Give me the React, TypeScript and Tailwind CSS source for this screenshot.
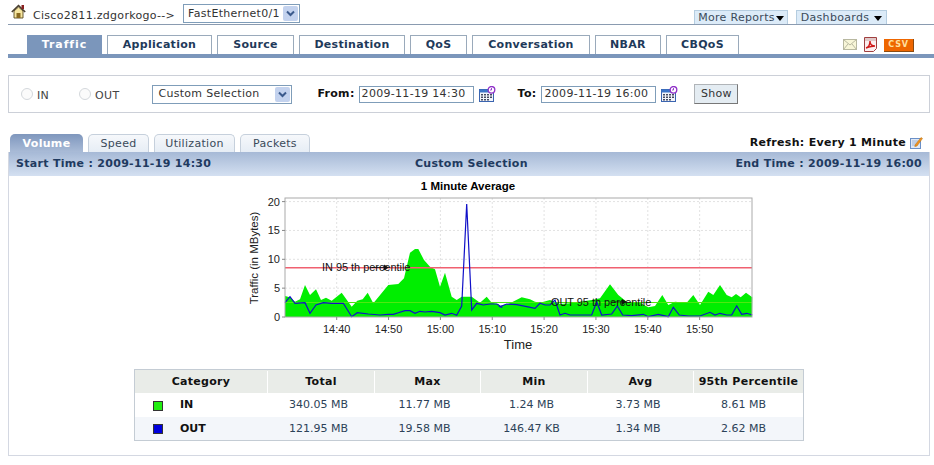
import React from "react"

const mainTabs = [
  { label: "Traffic", width: "w-[75px]", active: true },
  { label: "Application", width: "w-[105px]" },
  { label: "Source", width: "w-[77px]" },
  { label: "Destination", width: "w-[106px]" },
  { label: "QoS", width: "w-[57px]" },
  { label: "Conversation", width: "w-[118px]" },
  { label: "NBAR", width: "w-[66px]" },
  { label: "CBQoS", width: "w-[73px]" },
]

const subTabs = [
  { label: "Volume", width: "w-[73px]", active: true },
  { label: "Speed", width: "w-[61px]" },
  { label: "Utilization", width: "w-[81px]" },
  { label: "Packets", width: "w-[70px]" },
]

const rows = [
  { name: "IN", swatch: "bg-[#22ee11]", height: "h-[24px]", total: "340.05 MB", max: "11.77 MB", min: "1.24 MB", avg: "3.73 MB", pct: "8.61 MB", bg: "bg-white" },
  { name: "OUT", swatch: "bg-[#0000dd]", height: "h-[23px]", total: "121.95 MB", max: "19.58 MB", min: "146.47 KB", avg: "1.34 MB", pct: "2.62 MB", bg: "bg-[#f3f6fa]" },
]

// traced from the graph, in 3x crop coordinates
const greenLeft = [[135,348],[150,352],[165,365],[180,358],[195,315],[210,345],[228,328],[243,360],[258,353],[275,362],[305,338],[335,380],[352,362],[368,358],[383,338],[400,370],[445,315],[475,312],[492,295],[510,218],[525,207],[535,207],[552,240],[570,260],[585,268],[600,320],[615,278],[635,350],[650,360],[665,350],[695,350],[720,368],[740,350],[755,368],[775,372]]
const greenRight = [[0,378],[30,370],[65,352],[90,358],[105,365],[120,368],[150,360],[180,372],[210,370],[240,365],[275,360],[300,355],[330,313],[355,345],[380,365],[420,368],[445,382],[465,378],[487,345],[505,375],[525,365],[560,368],[580,345],[600,375],[625,335],[640,345],[660,315],[680,345],[695,352],[708,342],[722,352],[738,338],[757,352]]
const blueLeft = [[135,368],[150,350],[165,370],[195,368],[210,400],[228,375],[250,368],[275,370],[310,370],[335,410],[352,398],[385,402],[420,405],[445,403],[460,403],[475,398],[495,392],[510,392],[525,400],[540,394],[555,396],[575,394],[600,398],[615,405],[635,400],[650,406],[665,378],[680,72],[695,390],[710,370],[730,375],[750,372],[770,372],[787,382]]
const blueRight = [[0,380],[20,372],[50,374],[80,380],[105,385],[120,370],[135,375],[150,375],[165,360],[180,405],[195,400],[210,405],[275,405],[290,365],[305,405],[335,402],[352,378],[368,405],[395,407],[430,403],[445,410],[475,403],[505,410],[520,382],[538,405],[565,408],[600,408],[630,397],[645,405],[660,400],[680,405],[695,405],[710,378],[725,403],[740,400],[757,405]]

const toPts = (left: number[][], right: number[][]) =>
  [...left.map(([x, y]) => [x / 3, y / 3]), ...right.map(([x, y]) => [260 + x / 3, y / 3])]
    .map(([x, y]) => `${x.toFixed(1)},${y.toFixed(1)}`)
    .join(" ")

const greenPts = toPts(greenLeft, greenRight)
const bluePts = toPts(blueLeft, blueRight)

const timeTicks = ["14:40", "14:50", "15:00", "15:10", "15:20", "15:30", "15:40", "15:50"]
const valueTicks = [0, 5, 10, 15, 20]

function Chart() {
  return (
    <svg width="520" height="175" viewBox="0 0 520 175" className="block tracking-normal" fontFamily="'Liberation Sans', Arial, sans-serif">
      <text x="228" y="10" fontSize="11.5" fontWeight="700" textAnchor="middle" fill="#000">1 Minute Average</text>
      <rect x="45" y="18" width="467" height="119" fill="#fff" />
      {timeTicks.map((t, i) => (
        <line key={t} x1={96.7 + i * 51.85} x2={96.7 + i * 51.85} y1="18" y2="137" stroke="#e2e2e2" strokeDasharray="2 2" />
      ))}
      {valueTicks.slice(1).map((v) => (
        <line key={v} x1="45" x2="512" y1={137 - v * 5.77} y2={137 - v * 5.77} stroke="#e2e2e2" strokeDasharray="2 2" />
      ))}
      <polygon points={`45,137 ${greenPts} 512,137`} fill="#00ee00" />
      <line x1="45" x2="512" y1="122.5" y2="122.5" stroke="#50e810" />
      <line x1="45" x2="512" y1="87.8" y2="87.8" stroke="#f06070" strokeWidth="1.4" />
      <polyline points={bluePts} fill="none" stroke="#1010c8" strokeWidth="1.2" />
      <rect x="45" y="18" width="467" height="119" fill="none" stroke="#aaaaaa" />
      {valueTicks.map((v) => (
        <g key={v}>
          <line x1="42" x2="45" y1={137 - v * 5.77} y2={137 - v * 5.77} stroke="#888" />
          <text x="40" y={141 - v * 5.77} fontSize="11" textAnchor="end" fill="#222">{v}</text>
        </g>
      ))}
      {timeTicks.map((t, i) => (
        <g key={t}>
          <line x1={96.7 + i * 51.85} x2={96.7 + i * 51.85} y1="137" y2="140" stroke="#888" />
          <text x={96.7 + i * 51.85} y="153" fontSize="11" textAnchor="middle" fill="#222">{t}</text>
        </g>
      ))}
      <text x="82" y="91" fontSize="10.9" fill="#111">IN 95 th percentile</text>
      <text x="311" y="126" fontSize="10.9" fill="#111">OUT 95 th percentile</text>
      <path d="M132 87.5h16m-4-2.5l4 2.5-4 2.5z" stroke="#111" fill="#111" strokeWidth="0.8" />
      <path d="M372 122h14m-4-2.5l4 2.5-4 2.5z" stroke="#111" fill="#111" strokeWidth="0.8" />
      <text x="278" y="169" fontSize="13" textAnchor="middle" fill="#222">Time</text>
      <text transform="translate(18 78) rotate(-90)" fontSize="11.5" textAnchor="middle" fill="#222">Traffic (in MBytes)</text>
    </svg>
  )
}

function HomeIcon() {
  return (
    <svg width="15" height="15" viewBox="0 0 15 15" className="mt-[4px] shrink-0 self-start">
      <path d="M3 7v7h9V7L7.5 3z" fill="#f6e6a0" stroke="#5a4a20" strokeWidth="0.9" />
      <path d="M0.8 8L7.5 1.5 14.2 8" fill="none" stroke="#4a4030" strokeWidth="1.6" />
      <rect x="10.5" y="1" width="2.5" height="4" fill="#8a2020" />
      <rect x="5.5" y="9" width="4" height="5" fill="#8a6a20" />
    </svg>
  )
}

function CalendarIcon() {
  return (
    <svg width="17" height="16" viewBox="0 0 17 16" className="shrink-0">
      <rect x="0.5" y="3.5" width="14" height="12" fill="#f2f4fa" stroke="#3a64b0" />
      <rect x="0.5" y="3.5" width="14" height="3" fill="#3a74c8" />
      <path d="M2 8h2v1.5H2zM5 8h2v1.5H5zM8 8h2v1.5H8zM11 8h2v1.5h-2zM2 10.5h2V12H2zM5 10.5h2V12H5zM8 10.5h2V12H8zM11 10.5h2V12h-2zM2 13h2v1.5H2zM5 13h2v1.5H5zM8 13h2v1.5H8z" fill="#444a60" />
      <circle cx="12.5" cy="3.8" r="3.3" fill="#fff" stroke="#9030c8" strokeWidth="1.3" />
      <path d="M12.5 2v2h-1.5" fill="none" stroke="#9030c8" strokeWidth="0.9" />
    </svg>
  )
}

function MailIcon() {
  return (
    <svg width="14" height="11" viewBox="0 0 14 11">
      <rect x="0.5" y="0.5" width="13" height="10" fill="#f8f6d8" stroke="#b8b8a0" />
      <path d="M0.5 0.5L7 6l6.5-5.5M0.5 10.5L5 5M13.5 10.5L9 5" fill="none" stroke="#b8b8a0" />
    </svg>
  )
}

function PdfIcon() {
  return (
    <svg width="13" height="15" viewBox="0 0 13 15">
      <path d="M0.5 0.5h12v11l-3 3h-9z" fill="#fbeeee" stroke="#a04040" />
      <path d="M1 1h11v3H1z" fill="#e0c8c8" />
      <path d="M2 11c3-1 4-4 4-7 0 3 2 5 5 5-3 0-6 1-9 2z" fill="none" stroke="#d01818" strokeWidth="1.4" />
    </svg>
  )
}

function EditIcon() {
  return (
    <svg width="13" height="13" viewBox="0 0 13 13" className="-mt-[3px] shrink-0">
      <rect x="0.5" y="2.5" width="10" height="10" fill="#dfe8f6" stroke="#6a90c8" />
      <path d="M2 5h6M2 7h5M2 9h4" stroke="#a0b4d4" />
      <path d="M5 9l6-7.5 1.5 1L7 10l-2.2.6z" fill="#f09020" stroke="#b07010" strokeWidth="0.5" />
    </svg>
  )
}

function Chevron() {
  return (
    <span className="flex h-[15px] w-[15px] items-center justify-center rounded-[2px] bg-[#c3d2ee]">
      <svg width="9" height="7" viewBox="0 0 9 7">
        <path d="M1 1.5l3.5 3.5L8 1.5" fill="none" stroke="#3b5a8c" strokeWidth="2" />
      </svg>
    </span>
  )
}

function Radio({ label }: { label: string }) {
  return (
    <span className="flex items-center gap-[4px] text-[#444]">
      <span className="h-[12px] w-[12px] rounded-full border border-[#d4d8dc] bg-[#fbfbfb]" />
      <span className="pt-[5px]">{label}</span>
    </span>
  )
}

function DateField({ value }: { value: string }) {
  return (
    <span className="flex h-[17px] w-[115px] items-center border border-[#7f9db9] pl-[2px] pt-[1px] text-[#333]">{value}</span>
  )
}

function Caret() {
  return <span className="h-0 w-0 border-x-[4px] border-t-[5px] border-x-transparent border-t-black" />
}

export default function App() {
  return (
    <div className="h-[465px] w-[934px] overflow-hidden bg-white font-['DejaVu_Sans',Verdana,sans-serif] text-[11px] tracking-[0.3px]">
      {/* device line */}
      <div className="ml-[8px] flex h-[25px] border-b border-[#8a9bb0] pl-[3px]">
        <HomeIcon />
        <span className="ml-[7px] mt-[8px] text-[#333]">Cisco2811.zdgorkogo--&gt;</span>
        <span className="ml-[8px] mt-[4px] flex h-[19px] w-[117px] items-center justify-between border border-[#7f9db9] pl-[4px] pr-[1px] text-[#333]">
          <span className="pt-[1px]">FastEthernet0/1</span>
          <Chevron />
        </span>
        <div className="ml-auto mr-[47px] flex gap-[8px] self-end">
          <span className="flex h-[14px] w-[94px] items-center justify-center gap-[1px] border border-b-0 border-[#b5cde0] bg-[#dcebf8] pt-[2px] text-[#3a4a5a]">
            More Reports<Caret />
          </span>
          <span className="flex h-[14px] w-[91px] items-center justify-center gap-[5px] border border-b-0 border-[#b5cde0] bg-[#dcebf8] pt-[2px] text-[#3a4a5a]">
            Dashboards<Caret />
          </span>
        </div>
      </div>

      {/* report tabs */}
      <div className="ml-[8px] mt-[10px] flex h-[23px] items-end border-b-[4px] border-[#7b96bb] pl-[19px]">
        <div className="flex gap-[5px]">
          {mainTabs.map((t) => (
            <span
              key={t.label}
              className={`flex h-[19px] items-center justify-center pt-[1px] font-bold ${t.width} ${
                t.active ? "bg-[#7b96bb] tracking-[0.9px] text-white" : "border border-b-0 border-[#9aaabb] bg-white text-[#1f3a5a]"
              }`}
            >
              {t.label}
            </span>
          ))}
        </div>
        <div className="ml-auto mr-[20px] flex items-center gap-[7px] self-center">
          <MailIcon />
          <PdfIcon />
          <span className="mt-[1px] flex h-[13px] w-[30px] items-center justify-center border-b border-r border-[#8a4a10] bg-[#ee6600] pt-[1px] text-[8px] font-bold tracking-[0.8px] text-[#ffe0a0]">CSV</span>
        </div>
      </div>

      {/* filter box */}
      <div className="ml-[8px] mt-[17px] flex h-[38px] w-[922px] items-center border border-[#ccd0d8] pl-[12px]">
        <Radio label="IN" />
        <span className="ml-[30px]"><Radio label="OUT" /></span>
        <span className="ml-[33px] flex h-[19px] w-[140px] items-center justify-between border border-[#7f9db9] pl-[5px] pr-[1px] text-[#333]">
          <span className="pt-[1px]">Custom Selection</span>
          <Chevron />
        </span>
        <span className="ml-[25px] mr-[4px] pt-[1px] font-bold text-[#111]">From:</span>
        <DateField value="2009-11-19 14:30" />
        <span className="ml-[5px]"><CalendarIcon /></span>
        <span className="ml-[22px] mr-[5px] pt-[1px] font-bold text-[#111]">To:</span>
        <DateField value="2009-11-19 16:00" />
        <span className="ml-[5px]"><CalendarIcon /></span>
        <span className="ml-[16px] flex h-[20px] w-[44px] items-center justify-center border border-[#b0b4b8] border-b-[#777] border-r-[#777] bg-[#e4ecf2] pt-[1px] text-[#333]">Show</span>
      </div>

      {/* sub tabs */}
      <div className="ml-[10px] mt-[21px] flex h-[18px] w-[913px] items-end">
        <div className="flex gap-[5px]">
          {subTabs.map((t) => (
            <span
              key={t.label}
              className={`flex h-[18px] items-center justify-center rounded-t-[5px] pt-[2px] ${t.width} ${
                t.active
                  ? "bg-gradient-to-b from-[#7f97bd] to-[#a9bbd7] font-bold text-white"
                  : "border border-b-0 border-[#c6d0dc] bg-gradient-to-b from-[#f6f8fb] to-[#e6edf5] text-[#3a4a5a]"
              }`}
            >
              {t.label}
            </span>
          ))}
        </div>
        <span className="ml-auto flex items-center gap-[4px] self-center pt-[1px] font-bold text-[#111]">
          Refresh: Every 1 Minute
          <EditIcon />
        </span>
      </div>

      {/* panel */}
      <div className="ml-[8px] h-[304px] w-[922px] border-x border-b border-[#d4d8e2]">
        <div className="flex h-[24px] items-center justify-between bg-gradient-to-b from-[#a6b9d6] to-[#d4e0f1] px-[7px] font-bold text-[#1f3a60]">
          <span>Start Time : 2009-11-19 14:30</span>
          <span className="pr-[4px]">Custom Selection</span>
          <span>End Time : 2009-11-19 16:00</span>
        </div>
        <div className="ml-[231px] mt-[4px] w-[520px]">
          <Chart />
        </div>
        <div className="ml-[125px] mt-[14px] w-[670px] border border-[#c4ccd4]">
          <div className="grid h-[23px] grid-cols-[133px_107px_106px_107px_106px_109px] items-stretch bg-[#e9ece8] pt-[1px] font-bold text-[#111]">
            {["Category", "Total", "Max", "Min", "Avg", "95th Percentile"].map((h) => (
              <span key={h} className="flex items-center justify-center border-r border-white last:border-r-0">{h}</span>
            ))}
          </div>
          {rows.map((r) => (
            <div key={r.name} className={`grid grid-cols-[133px_107px_106px_107px_106px_109px] items-center pt-[1px] tracking-normal text-[#2c4258] ${r.height} ${r.bg}`}>
              <span className="flex items-center pl-[18px] font-bold text-[#111]">
                <span className={`h-[10px] w-[10px] border border-[#333] ${r.swatch}`} />
                <span className="ml-[17px]">{r.name}</span>
              </span>
              <span className="pr-[6px] text-center">{r.total}</span>
              <span className="pr-[7px] text-center">{r.max}</span>
              <span className="pr-[6px] text-center">{r.min}</span>
              <span className="pr-[6px] text-center">{r.avg}</span>
              <span className="pr-[10px] text-center">{r.pct}</span>
            </div>
          ))}
        </div>
      </div>
    </div>
  )
}
